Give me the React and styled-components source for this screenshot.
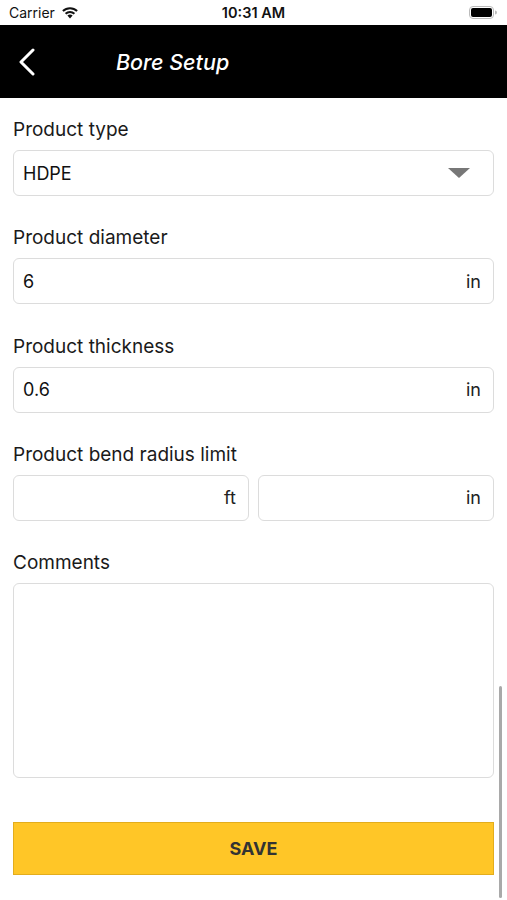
import React from "react";
import styled, { createGlobalStyle } from "styled-components";

const Global = createGlobalStyle`
  html, body { margin: 0; padding: 0; background: #fff; }
  body { font-family: Inter, Roboto, "Liberation Sans", Arial, sans-serif; color: #111; }
`;

const Screen = styled.div`
  position: relative;
  width: 507px;
  height: 900px;
  overflow: hidden;
  background: #fff;
  display: flex;
  flex-direction: column;
`;

const StatusBar = styled.div`
  height: 25px;
  display: grid;
  grid-template-columns: 1fr auto 1fr;
  align-items: center;
  padding: 0 9px;
  font-size: 14px;
  color: #111;
`;

const Carrier = styled.div`
  display: flex;
  align-items: center;
  gap: 6px;
`;

const Time = styled.div`
  font-weight: 600;
  font-size: 14.5px;
`;

const Battery = styled.div`
  justify-self: end;
  display: flex;
  align-items: center;
  margin-right: 1px;
`;

const Header = styled.header`
  height: 73px;
  flex: none;
  background: #000;
  display: flex;
  align-items: center;
  padding-left: 18px;
`;

const Back = styled.button`
  background: none;
  border: 0;
  padding: 0;
  display: flex;
  align-items: center;
  width: 98px;
`;

const Title = styled.h1`
  margin: 0;
  color: #fff;
  font-size: 21.5px;
  font-style: italic;
  font-weight: 500;
`;

const Form = styled.div`
  padding: 20px 13px 0;
  display: flex;
  flex-direction: column;
  gap: 30.25px;
`;

const Field = styled.div`
  display: flex;
  flex-direction: column;
  gap: 8px;
`;

const Label = styled.div`
  font-size: 19px;
  line-height: 24px;
  color: #1a1a1a;
`;

const Row = styled.div`
  display: flex;
  gap: 9px;
`;

const Box = styled.div`
  flex: ${(p) => (p.$grow ? "1 1 0" : "none")};
  height: ${(p) => p.$h || 46}px;
  box-sizing: border-box;
  border: 1px solid #dcdcdc;
  border-radius: 6px;
  display: flex;
  align-items: center;
  justify-content: space-between;
  padding: 0 12px 0 9px;
  font-size: 18px;
  color: #111;
`;

const Unit = styled.span`
  margin-left: auto;
  font-size: 18px;
  color: #222;
`;

const Caret = styled.span`
  width: 0;
  height: 0;
  border-left: 11px solid transparent;
  border-right: 11px solid transparent;
  border-top: 10px solid #777;
  margin-right: 11px;
`;

const SaveButton = styled.button`
  margin: 14px 0 0;
  height: 53px;
  background: #ffc627;
  border: 1px solid #e3ad1d;
  font-family: inherit;
  font-size: 18px;
  font-weight: 700;
  color: #333;
`;

const ScrollThumb = styled.div`
  position: absolute;
  right: 5px;
  top: 686px;
  width: 3px;
  height: 212px;
  border-radius: 2px;
  background: #a9a9a9;
`;

export default function App() {
  return (
    <>
      <Global />
      <Screen>
        <StatusBar>
          <Carrier>
            Carrier
            <svg width="18" height="13" viewBox="0 0 18 13">
              <path d="M9 12.5 L6.4 9.6 A3.8 3.8 0 0 1 11.6 9.6 Z" fill="#111" />
              <path d="M3.9 7.1 A7.3 7.3 0 0 1 14.1 7.1 L12.7 8.6 A5.3 5.3 0 0 0 5.3 8.6 Z" fill="#111" />
              <path d="M1.2 4.3 A11.2 11.2 0 0 1 16.8 4.3 L15.4 5.8 A9.2 9.2 0 0 0 2.6 5.8 Z" fill="#111" />
            </svg>
          </Carrier>
          <Time>10:31 AM</Time>
          <Battery>
            <svg width="28" height="13" viewBox="0 0 28 13">
              <rect x="0.5" y="0.5" width="24" height="12" rx="3.5" fill="none" stroke="#bbb" />
              <rect x="2" y="2" width="21" height="9" rx="2" fill="#000" />
              <path d="M26 4.5 A2 2 0 0 1 26 8.5 Z" fill="#bbb" />
            </svg>
          </Battery>
        </StatusBar>
        <Header>
          <Back aria-label="Back">
            <svg width="18" height="28" viewBox="0 0 18 28">
              <path d="M15 2 L3 14 L15 26" fill="none" stroke="#fff" strokeWidth="3" strokeLinecap="round" strokeLinejoin="round" />
            </svg>
          </Back>
          <Title>Bore Setup</Title>
        </Header>
        <Form>
          <Field>
            <Label>Product type</Label>
            <Box>
              HDPE
              <Caret />
            </Box>
          </Field>
          <Field>
            <Label>Product diameter</Label>
            <Box>
              6<Unit>in</Unit>
            </Box>
          </Field>
          <Field>
            <Label>Product thickness</Label>
            <Box>
              0.6<Unit>in</Unit>
            </Box>
          </Field>
          <Field>
            <Label>Product bend radius limit</Label>
            <Row>
              <Box $grow>
                <Unit>ft</Unit>
              </Box>
              <Box $grow>
                <Unit>in</Unit>
              </Box>
            </Row>
          </Field>
          <Field>
            <Label>Comments</Label>
            <Box $h={195} />
          </Field>
          <SaveButton>SAVE</SaveButton>
        </Form>
        <ScrollThumb />
      </Screen>
    </>
  );
}
